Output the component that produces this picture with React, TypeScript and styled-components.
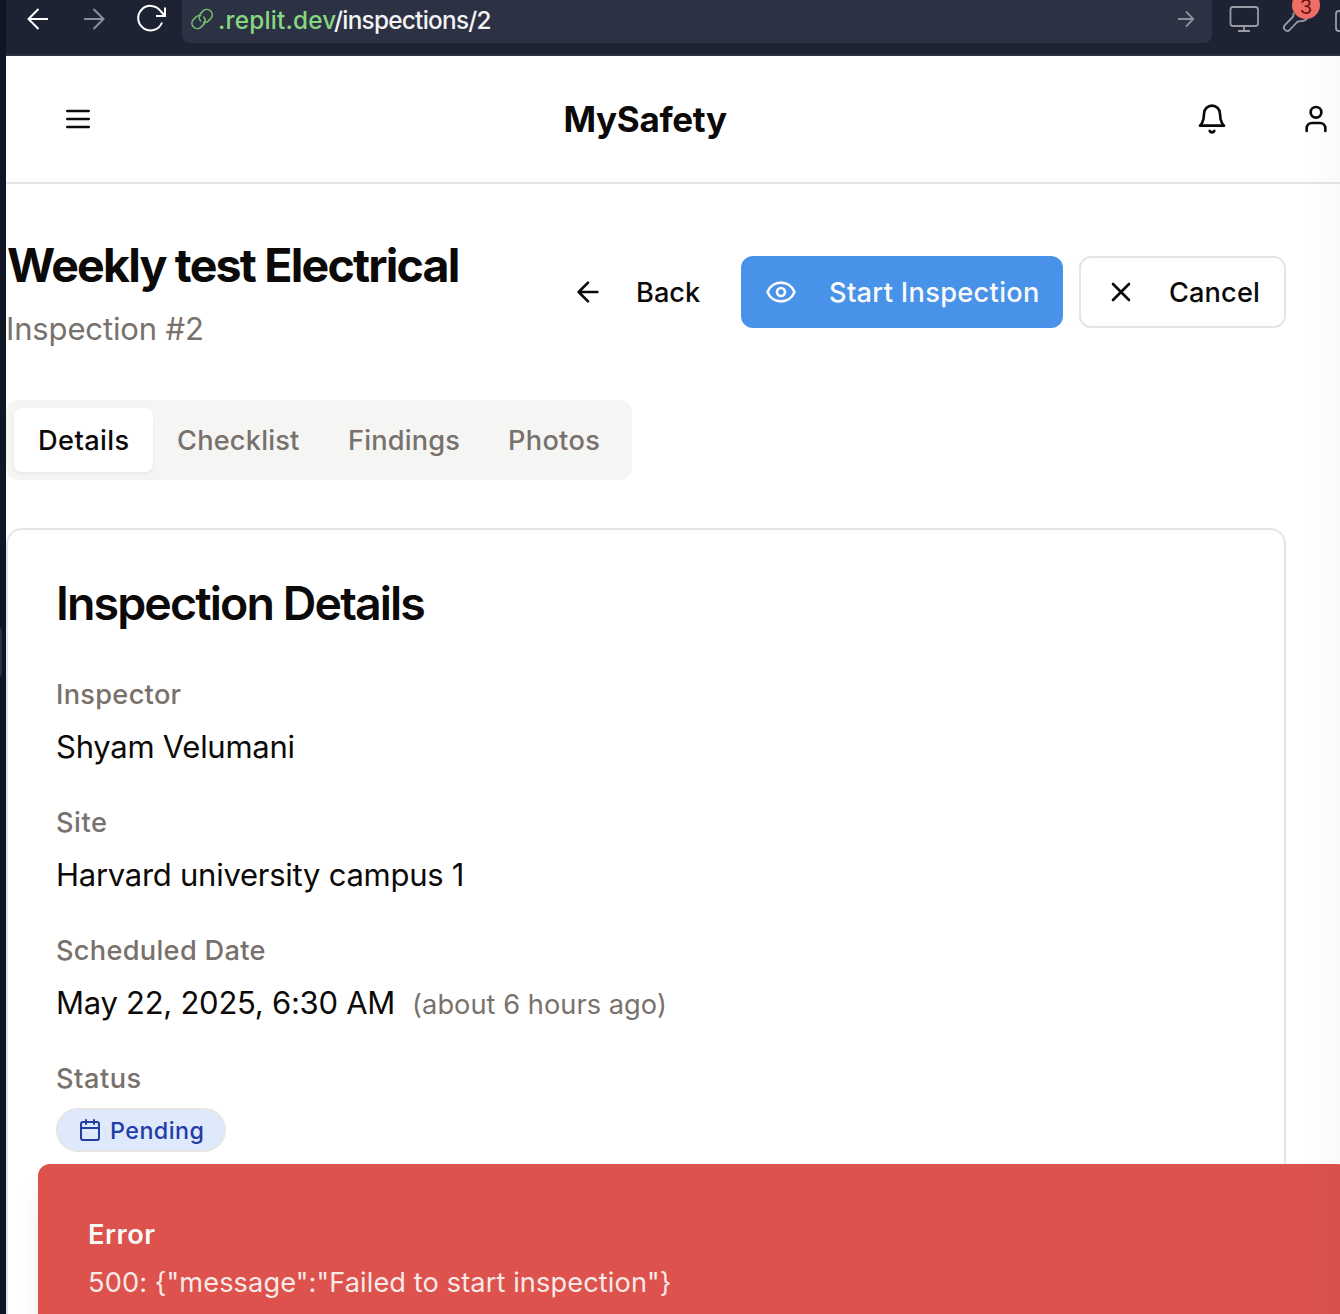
import React from "react";
import styled, { createGlobalStyle } from "styled-components";

const Global = createGlobalStyle`
  * { box-sizing: border-box; }
  html, body { margin: 0; padding: 0; overflow: hidden; }
  body { background: #fff; font-family: Inter, "Liberation Sans", sans-serif; color: #0c0a09; }
  h1, h2, p { margin: 0; }
  button { font: inherit; color: inherit; background: none; border: 0; padding: 0; margin: 0; }
  svg { display: block; flex: none; }
`;

const Window = styled.div`
  position: relative;
  display: flex;
  width: 1340px;
  height: 1314px;
  overflow: hidden;
`;

const EdgeStrip = styled.div`
  flex: none;
  width: 6px;
  height: 100%;
  padding-top: 628px;
  background: #0f1524;
`;

const Handle = styled.div`
  width: 2px;
  height: 48px;
  border-radius: 0 2px 2px 0;
  background: #2a3040;
`;

const Browser = styled.div`
  flex: none;
  width: 1334px;
  height: 1314px;
  background: #fff;
  overflow: hidden;
`;

const Toolbar = styled.div`
  display: flex;
  align-items: flex-start;
  height: 56px;
  background: #1e2333;
  border-bottom: 2px solid #2b3143;
`;

const NavIcons = styled.div`
  display: flex;
  flex: none;
  width: 176px;
  height: 43px;
`;

const AddressBar = styled.div`
  display: flex;
  flex: none;
  align-items: center;
  width: 1030px;
  height: 43px;
  padding: 0 17px 5px 8px;
  border-radius: 0 0 8px 8px;
  background: #2d3144;
`;

const UrlText = styled.div`
  display: flex;
  flex: 1;
  margin-left: 4px;
  padding-top: 2px;
  font-size: 24.3px;
  line-height: 34px;
  white-space: nowrap;
`;

const Host = styled.span`
  width: 116px;
  letter-spacing: 0.2px;
  font-weight: 500;
  color: #86d780;
`;

const Path = styled.span`
  letter-spacing: -0.72px;
  font-weight: 500;
  color: #f4f4f6;
`;

const ToolIcons = styled.div`
  position: relative;
  flex: none;
  width: 128px;
  height: 43px;
`;

const CountBadge = styled.span`
  position: absolute;
  left: 80px;
  top: -9px;
  width: 28px;
  height: 28px;
  padding-top: 9px;
  border-radius: 50%;
  background: #ee6d66;
  color: #6b0f10;
  font-size: 20px;
  line-height: 14px;
  text-align: center;
`;

const AppHeader = styled.header`
  display: flex;
  align-items: center;
  justify-content: space-between;
  width: 1382px;
  height: 128px;
  padding: 0 32px;
  border-bottom: 2px solid #e5e5e5;
`;

const IconButton = styled.button`
  display: flex;
  align-items: center;
  justify-content: center;
  width: 80px;
  height: 80px;
`;

const HeaderActions = styled.div`
  display: flex;
  gap: 24px;
`;

const Brand = styled.h1`
  font-size: 35px;
  font-weight: 700;
  line-height: 56px;
  width: 163px;
  letter-spacing: -0.35px;
  white-space: nowrap;
`;

const Main = styled.main`
  display: flex;
  flex-direction: column;
  gap: 48px;
  width: 1280px;
  padding-top: 48px;
`;

const PageTop = styled.div`
  display: flex;
  align-items: center;
  justify-content: space-between;
  height: 120px;
`;

const Title = styled.h1`
  padding-top: 1px;
  padding-left: 1px;
  font-size: 46.5px;
  font-weight: 700;
  line-height: 64px;
  letter-spacing: -1.79px;
  white-space: nowrap;
`;

const Subtitle = styled.p`
  margin-top: 8px;
  font-size: 31px;
  line-height: 48px;
  letter-spacing: -0.14px;
  color: #78716c;
`;

const Actions = styled.div`
  display: flex;
  gap: 16px;
`;

const buttonLooks = {
  ghost: "border: 0 solid transparent;",
  primary: "background: #4892ea; color: #fafaf9;",
  outline: "border: 2px solid #e5e5e5;",
};

const ActionButton = styled.button<{ $look: keyof typeof buttonLooks; $width: number; $track: number }>`
  display: flex;
  align-items: center;
  gap: 32px;
  width: ${(p) => p.$width}px;
  height: 72px;
  padding: 0 24px;
  border-radius: 12px;
  font-size: 27.2px;
  font-weight: 500;
  letter-spacing: ${(p) => p.$track}px;
  white-space: nowrap;
  ${(p) => buttonLooks[p.$look]}
`;

const Tabs = styled.div`
  display: flex;
  width: 626px;
  height: 80px;
  padding: 8px;
  border-radius: 12px;
  background: #f5f5f4;
`;

const Tab = styled.button<{ $active?: boolean; $width: number; $track: number }>`
  width: ${(p) => p.$width}px;
  height: 64px;
  padding-left: 24px;
  border-radius: 8px;
  font-size: 27.2px;
  font-weight: 500;
  letter-spacing: ${(p) => p.$track}px;
  text-align: left;
  color: ${(p) => (p.$active ? "#0c0a09" : "#78716c")};
  background: ${(p) => (p.$active ? "#fff" : "transparent")};
  box-shadow: ${(p) => (p.$active ? "0 2px 4px rgba(0,0,0,0.05)" : "none")};
`;

const Card = styled.section`
  height: 900px;
  padding: 48px;
  border: 2px solid #e5e5e5;
  border-radius: 16px;
`;

const CardTitle = styled.h2`
  padding-top: 1px;
  margin-bottom: 48px;
  font-size: 46.5px;
  font-weight: 600;
  line-height: 48px;
  letter-spacing: -1.88px;
`;

const Fields = styled.div`
  display: flex;
  flex-direction: column;
  gap: 32px;
`;

const Field = styled.div`
  display: flex;
  flex-direction: column;
  gap: 8px;
  height: 96px;
`;

const Label = styled.p<{ $track?: number }>`
  font-size: 27.2px;
  font-weight: 500;
  line-height: 40px;
  letter-spacing: ${(p) => p.$track ?? 0.29}px;
  color: #78716c;
`;

const Value = styled.p`
  font-size: 31px;
  line-height: 48px;
  letter-spacing: -0.26px;
`;

const Muted = styled.span`
  margin-left: 17px;
  font-size: 27.2px;
  letter-spacing: 0.05px;
  color: #78716c;
`;

const StatusBadge = styled.span`
  display: flex;
  align-items: center;
  gap: 8px;
  width: 170px;
  height: 44px;
  margin-top: 1px;
  padding-left: 20px;
  border: 2px solid #e5e5e5;
  border-radius: 22px;
  background: #dee9fc;
  color: #233ca6;
`;

const BadgeText = styled.span`
  padding-top: 2px;
  font-size: 23.3px;
  font-weight: 500;
  line-height: 32px;
  letter-spacing: 0.45px;
`;

const Toast = styled.div`
  position: absolute;
  left: 38px;
  top: 1164px;
  width: 1311px;
  height: 180px;
  padding: 51px 50px;
  border-radius: 12px;
  background: #dd524c;
  color: #fafaf9;
  box-shadow: 0 20px 30px -6px rgba(0, 0, 0, 0.1), 0 8px 12px -8px rgba(0, 0, 0, 0.1);
`;

const ToastTitle = styled.p`
  margin-bottom: 8px;
  font-size: 27.2px;
  font-weight: 600;
  line-height: 40px;
  letter-spacing: 0.5px;
`;

const ToastText = styled.p`
  font-size: 27.2px;
  line-height: 40px;
  letter-spacing: 0.1px;
  opacity: 0.9;
`;

const EdgeShade = styled.div`
  position: absolute;
  right: 0;
  top: 56px;
  bottom: 0;
  width: 40px;
  background: linear-gradient(to right, rgba(0, 0, 0, 0), rgba(0, 0, 0, 0.018));
  pointer-events: none;
`;

const Icon = ({ size = 32, children }: { size?: number; children: React.ReactNode }) => (
  <svg width={size} height={size} viewBox="0 0 24 24" fill="none" stroke="currentColor" strokeWidth="2" strokeLinecap="round" strokeLinejoin="round">
    {children}
  </svg>
);

export default function App() {
  return (
    <>
      <Global />
      <Window>
        <EdgeStrip>
          <Handle />
        </EdgeStrip>
        <Browser>
          <Toolbar>
            <NavIcons>
              <svg width="176" height="43" viewBox="6 0 176 43" fill="none" strokeWidth="2">
                <path d="M48 19H28.500M38.500 9L28.500 19l10 10" stroke="#fff" />
                <path d="M84 19h19.500M93.500 9l10 10-10 10" stroke="#8d9097" />
                <path d="M162 22.500a12.300 12.300 0 1 1-1.500-11.500l4 4.500M165 7.500v8.500h-9" stroke="#fff" />
              </svg>
            </NavIcons>
            <AddressBar>
              <svg width="24" height="26" viewBox="190 6 24 26" fill="none" stroke="#6fbf70" strokeWidth="1.6" strokeLinecap="round">
                <path d="M200.500 20.800a5.400 5.400 0 0 1 .2-7.400l2.700-2.700a5.400 5.400 0 0 1 7.600 7.600l-2.800 2.800a5.400 5.400 0 0 1-4.600 1.300" />
                <path d="M203.700 17a5.400 5.400 0 0 1-.2 7.600l-2.700 2.700a5.400 5.400 0 0 1-7.600-7.600l2.800-2.800a5.400 5.400 0 0 1 4.600-1.300" />
              </svg>
              <UrlText>
                <Host>.replit.dev</Host>
                <Path>/inspections/2</Path>
              </UrlText>
              <svg width="18" height="18" viewBox="0 0 18 18" fill="none" stroke="#8d9097" strokeWidth="1.800">
                <path d="M1 9h15M9 1.500L16.300 9 9 16.500" />
              </svg>
            </AddressBar>
            <ToolIcons>
              <svg width="128" height="43" viewBox="1212 0 128 43" fill="none" stroke="#9a9ca3" strokeWidth="1.800" strokeLinejoin="round">
                <rect x="1230.500" y="7" width="27.500" height="19" rx="2.500" />
                <path d="M1244 26v5M1238 31h12" />
                <path d="M1293.500 12.500c.2 2 .1 3.500-.7 4.500l-8 8.200a3.400 3.400 0 0 0 4.800 4.800l8-8.300c1.200-.8 3-.7 4.800-.5 2-.3 4-1.500 5.500-3.500" />
                <rect x="1336" y="11" width="20" height="20" rx="3" />
              </svg>
              <CountBadge>3</CountBadge>
            </ToolIcons>
          </Toolbar>
          <AppHeader>
            <IconButton aria-label="Menu">
              <Icon><path d="M4 6h16M4 12h16M4 18h16" /></Icon>
            </IconButton>
            <Brand>MySafety</Brand>
            <HeaderActions>
              <IconButton aria-label="Notifications">
                <Icon>
                  <path d="M6 8a6 6 0 0 1 12 0c0 7 3 9 3 9H3s3-2 3-9" />
                  <path d="M10.300 21a1.940 1.940 0 0 0 3.400 0" />
                </Icon>
              </IconButton>
              <IconButton aria-label="Account">
                <Icon>
                  <path d="M19 21v-2a4 4 0 0 0-4-4H9a4 4 0 0 0-4 4v2" />
                  <circle cx="12" cy="7" r="4" />
                </Icon>
              </IconButton>
            </HeaderActions>
          </AppHeader>
          <Main>
            <PageTop>
              <div>
                <Title>Weekly test Electrical</Title>
                <Subtitle>Inspection #2</Subtitle>
              </div>
              <Actions>
                <ActionButton $look="ghost" $width={177} $track={0.03}>
                  <Icon><path d="m12 19-7-7 7-7M19 12H5" /></Icon>
                  Back
                </ActionButton>
                <ActionButton $look="primary" $width={322} $track={0.32}>
                  <Icon>
                    <path d="M2.062 12.348a1 1 0 0 1 0-.696 10.750 10.750 0 0 1 19.876 0 1 1 0 0 1 0 .696 10.750 10.750 0 0 1-19.876 0" />
                    <circle cx="12" cy="12" r="3" />
                  </Icon>
                  Start Inspection
                </ActionButton>
                <ActionButton $look="outline" $width={207} $track={0.12}>
                  <Icon><path d="M18 6 6 18M6 6l12 12" /></Icon>
                  Cancel
                </ActionButton>
              </Actions>
            </PageTop>
            <Tabs>
              <Tab $active $width={139} $track={0.4}>Details</Tab>
              <Tab $width={171} $track={0.2}>Checklist</Tab>
              <Tab $width={160} $track={0.15}>Findings</Tab>
              <Tab $width={140} $track={0.3}>Photos</Tab>
            </Tabs>
            <Card>
              <CardTitle>Inspection Details</CardTitle>
              <Fields>
                <Field>
                  <Label>Inspector</Label>
                  <Value>Shyam Velumani</Value>
                </Field>
                <Field>
                  <Label $track={0.5}>Site</Label>
                  <Value>Harvard university campus 1</Value>
                </Field>
                <Field>
                  <Label>Scheduled Date</Label>
                  <Value>
                    May 22, 2025, 6:30 AM<Muted>(about 6 hours ago)</Muted>
                  </Value>
                </Field>
                <Field>
                  <Label $track={0.5}>Status</Label>
                  <StatusBadge>
                    <Icon size={24}>
                      <path d="M8 2v4M16 2v4M3 10h18" />
                      <rect width="18" height="18" x="3" y="4" rx="2" />
                    </Icon>
                    <BadgeText>Pending</BadgeText>
                  </StatusBadge>
                </Field>
              </Fields>
            </Card>
          </Main>
        </Browser>
        <Toast>
          <ToastTitle>Error</ToastTitle>
          <ToastText>{'500: {"message":"Failed to start inspection"}'}</ToastText>
        </Toast>
        <EdgeShade />
      </Window>
    </>
  );
}
